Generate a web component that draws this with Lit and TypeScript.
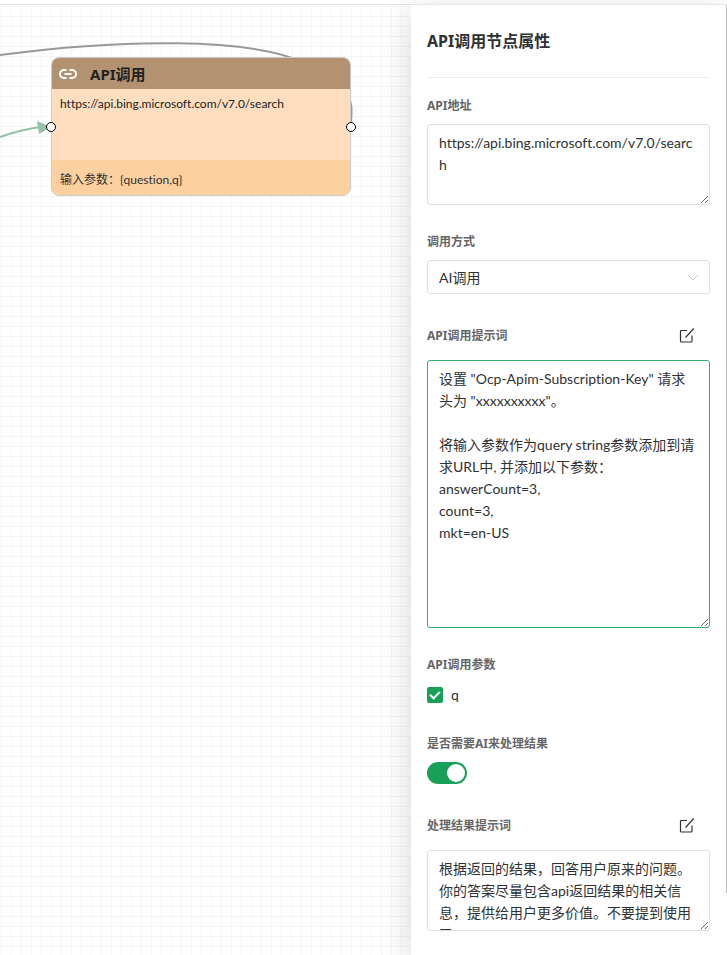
import { LitElement, html, css, svg } from "lit";
import { customElement, property } from "lit/decorators.js";

const editIcon = svg`<svg viewBox="0 0 16 16" width="16" height="16" aria-hidden="true">
  <path d="M8 2.500H2.500a1 1 0 0 0-1 1V13a1 1 0 0 0 1 1H12a1 1 0 0 0 1-1V7.500M6.500 9.500L14.800 .5" fill="none" stroke="#303133" stroke-width="1.200"/>
</svg>`;

const linkIcon = svg`<svg viewBox="0 0 18 12" width="18" height="12" aria-hidden="true">
  <path d="M7.500 2H5a4 4 0 0 0 0 8H7.500M10.500 2H13a4 4 0 0 1 0 8H10.500M5.500 6H12.500" fill="none" stroke="#fff" stroke-width="2"/>
</svg>`;

@customElement("flow-node")
class FlowNode extends LitElement {
  @property() heading = "";
  @property() url = "";
  @property() params = "";

  static styles = css`
    :host { display: block; }
    .node {
      position: relative;
      box-sizing: border-box;
      border: 1px solid #ccc;
      border-radius: 8px;
      background: #ffdebf;
      color: #222;
      font-size: 12px;
    }
    .head {
      display: flex;
      align-items: center;
      gap: 13px;
      height: 31px;
      padding: 0 7px;
      border-radius: 7px 7px 0 0;
      background: #b29270;
      box-sizing: border-box;
    }
    .title { margin: 0; font-family: "Noto Sans", "Noto Sans CJK SC", sans-serif; font-size: 15px; line-height: 32px; font-weight: 700; }
    .body { height: 71px; padding: 5px 8px; box-sizing: border-box; line-height: 20px; }
    .foot {
      height: 35px;
      padding: 9px 8px 4px;
      box-sizing: border-box;
      line-height: 22px;
      border-radius: 0 0 7px 7px;
      background: #fdd0a0;
      color: #303133;
    }
    .port {
      position: absolute;
      top: 64px;
      width: 10px;
      height: 10px;
      box-sizing: border-box;
      border: 1px solid #000;
      border-radius: 50%;
      background: #fff;
    }
    .in { left: -6px; }
    .out { right: -6px; }
  `;

  render() {
    return html`<article class="node">
      <header class="head">${linkIcon}<h3 class="title">${this.heading}</h3></header>
      <div class="body">${this.url}</div>
      <div class="foot">${this.params}</div>
      <span class="port in"></span><span class="port out"></span>
    </article>`;
  }
}

@customElement("app-root")
class AppRoot extends LitElement {
  static styles = css`
    :host {
      display: block;
      font-family: Lato, "Noto Sans CJK SC", sans-serif;
      font-size: 14px;
      font-variant-ligatures: none;
      color: #303133;
    }
    .page {
      display: grid;
      grid-template-columns: minmax(0, 1fr) 316px;
      height: 100vh;
      box-sizing: border-box;
      padding-top: 4px;
      overflow: hidden;
    }
    .canvas {
      position: relative;
      overflow: hidden;
      border-top: 1px solid #e4e7ed;
      background-color: #fff;
      background-image:
        linear-gradient(to right, #f5f5f5 1px, transparent 1px),
        linear-gradient(to bottom, #f5f5f5 1px, transparent 1px);
      background-size: 10px 10px;
      background-position: 1px 1px;
    }
    .edges { position: absolute; left: 0; top: 0; }
    .placed { position: absolute; left: 51px; top: 52px; width: 300px; }
    .panel {
      border-top: 1px solid #e4e7ed;
      padding: 0 17px 0 16px;
      background: #fff;
      box-shadow: 0 8px 32px rgba(0, 0, 0, 0.16);
      position: relative;
      overflow: hidden;
    }
    .thumb {
      position: absolute;
      right: 0;
      top: 0;
      width: 1px;
      height: 888px;
      background: #c1c1c1;
    }
    .panel-title {
      margin: 0 0 16px;
      height: 72px;
      border-bottom: 1px solid #ebeef5;
      font-family: "Noto Sans", "Noto Sans CJK SC", sans-serif;
      font-size: 16px;
      line-height: 72px;
    }
    .form { display: flex; flex-direction: column; gap: 25px; }
    .row { display: flex; align-items: center; justify-content: space-between; height: 33px; margin-bottom: 8px; padding-right: 15px; }
    .label {
      display: block;
      margin: 0 0 6px;
      font-family: "Noto Sans", "Noto Sans CJK SC", sans-serif;
      font-size: 12px;
      line-height: 24px;
      font-weight: 700;
      color: #666;
    }
    .row .label { margin: 0; }
    .icon-button { display: flex; padding: 0; border: 0; background: none; cursor: pointer; }
    .input {
      display: block;
      width: 100%;
      box-sizing: border-box;
      border: 1px solid #dcdfe6;
      border-radius: 3px;
      background: #fff;
      color: #303133;
      font: inherit;
      font-variant-ligatures: none;
      outline: none;
    }
    .area { height: 81px; padding: 7px 11px; line-height: 22px; overflow: hidden; word-break: break-all; }
    .large { height: 268px; }
    .active { border-color: #36ad6a; }
    .select-wrap { display: grid; align-items: center; }
    .select { grid-area: 1 / 1; height: 34px; padding: 0 11px; appearance: none; }
    .chevron { grid-area: 1 / 1; justify-self: end; margin-right: 11px; pointer-events: none; }
    .check { display: flex; align-items: center; gap: 8px; line-height: 24px; }
    .box { appearance: none; width: 16px; height: 16px; margin: 0; border-radius: 2px; background: #18a058; display: grid; place-items: center; }
    .box::after {
      content: "";
      width: 10px;
      height: 6px;
      border-left: 2px solid #fff;
      border-bottom: 2px solid #fff;
      box-sizing: border-box;
      transform: translateY(-1px) rotate(-45deg);
    }
    .switch {
      appearance: none;
      display: flex;
      align-items: center;
      justify-content: flex-end;
      width: 40px;
      height: 22px;
      margin: 0;
      padding: 2px;
      box-sizing: border-box;
      border-radius: 11px;
      background: #18a058;
    }
    .switch::after { content: ""; width: 18px; height: 18px; border-radius: 50%; background: #fff; }
  `;

  render() {
    return html`<main class="page">
      <section class="canvas">
        <svg class="edges" width="420" height="200" fill="none" aria-hidden="true">
          <path d="M0 50C120 34 250 32 305 58S351 100 351 121" stroke="#999" stroke-width="2"/>
          <path d="M0 132Q20 125 40 122" stroke="#96c0a8" stroke-width="2"/>
          <path d="M37 116L51 122L39 129Z" fill="#96c0a8"/>
        </svg>
        <flow-node class="placed" heading="API调用" url="https://api.bing.microsoft.com/v7.0/search" params="输入参数：{question,q}"></flow-node>
      </section>
      <aside class="panel">
        <h2 class="panel-title">API调用节点属性</h2>
        <form class="form">
          <div class="field">
            <label class="label" for="url">API地址</label>
            <textarea class="input area" id="url" spellcheck="false" .value=${"https://api.bing.microsoft.com/v7.0/search"}></textarea>
          </div>
          <div class="field">
            <label class="label" for="mode">调用方式</label>
            <div class="select-wrap">
              <select class="input select" id="mode"><option>AI调用</option></select>
              <svg class="chevron" width="12" height="12" viewBox="0 0 12 12" aria-hidden="true"><path d="M1 4L6 9L11 4" fill="none" stroke="#c0c4cc"/></svg>
            </div>
          </div>
          <div class="field">
            <div class="row">
              <label class="label" for="prompt">API调用提示词</label>
              <button class="icon-button" type="button" aria-label="编辑API调用提示词">${editIcon}</button>
            </div>
            <textarea class="input area large active" id="prompt" spellcheck="false" .value=${'设置 "Ocp-Apim-Subscription-Key" 请求头为 "xxxxxxxxxx"。\n\n将输入参数作为query string参数添加到请求URL中, 并添加以下参数：\nanswerCount=3,\ncount=3,\nmkt=en-US'}></textarea>
          </div>
          <div class="field">
            <span class="label">API调用参数</span>
            <label class="check"><input class="box" type="checkbox" checked />q</label>
          </div>
          <div class="field">
            <label class="label" for="ai">是否需要AI来处理结果</label>
            <input class="switch" id="ai" type="checkbox" role="switch" checked />
          </div>
          <div class="field">
            <div class="row">
              <label class="label" for="result">处理结果提示词</label>
              <button class="icon-button" type="button" aria-label="编辑处理结果提示词">${editIcon}</button>
            </div>
            <textarea class="input area" id="result" spellcheck="false" .value=${"根据返回的结果，回答用户原来的问题。你的答案尽量包含api返回结果的相关信息，提供给用户更多价值。不要提到使用了"}></textarea>
          </div>
        </form>
        <span class="thumb"></span>
      </aside>
    </main>`;
  }
}
